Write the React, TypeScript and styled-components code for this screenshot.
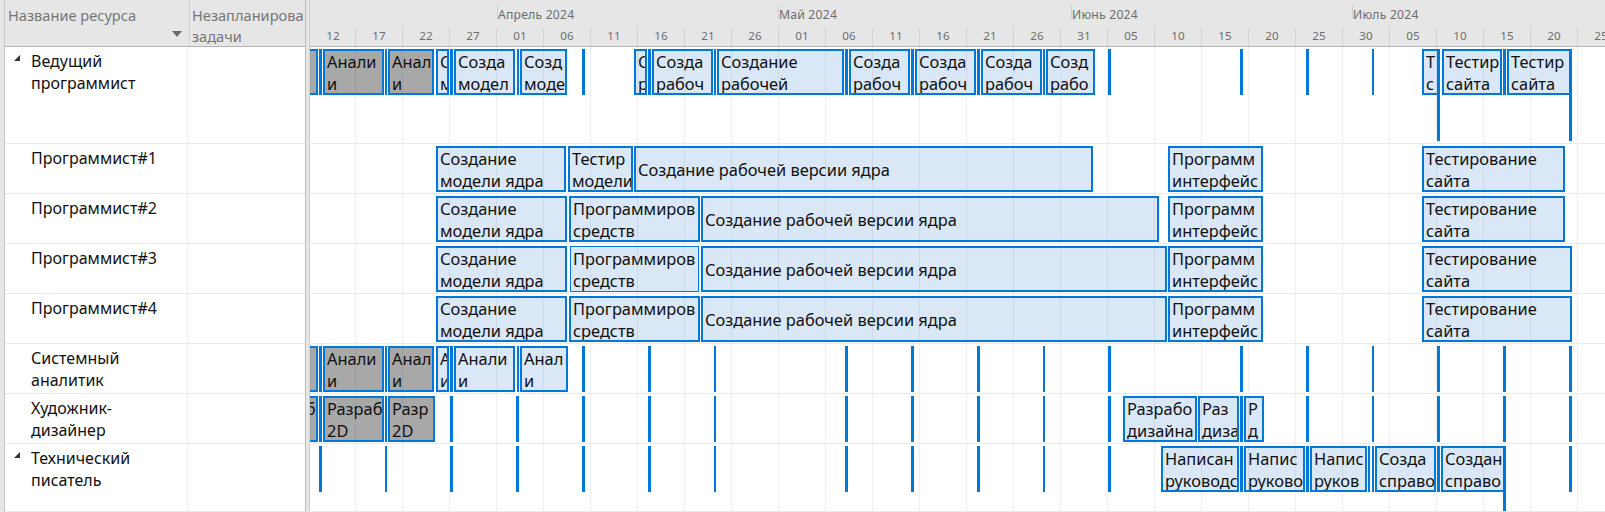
import { createGlobalStyle } from "styled-components";
import styled from "styled-components";

const GlobalStyle = createGlobalStyle`
  html, body {
    margin: 0;
    padding: 0;
    background: #fff;
    overflow: hidden;
  }
  body {
    font-family: "Noto Sans", "Open Sans", sans-serif;
  }
`;

const Window = styled.div`
  display: flex;
  width: 1605px;
  height: 512px;
  overflow: hidden;
  background: #fff;
`;

const EdgeStrip = styled.div`
  width: 4px;
  background: #e6e6e6;
  border-right: 1px solid #c6c6c6;
`;

const SheetPane = styled.div`
  display: flex;
  flex-direction: column;
  width: 300px;
`;

const SheetHeader = styled.div`
  display: flex;
  height: 46px;
  background: #e6e6e6;
  border-bottom: 1px solid #b4b4b4;
  color: #777;
  font-size: 14.6px;
  line-height: 20px;
`;

const NameHeader = styled.div`
  display: flex;
  flex-direction: column;
  justify-content: space-between;
  width: 179px;
  padding: 5px 2px 9px 3px;
  border-right: 1px solid #d2d2d2;
  box-sizing: content-box;
  height: 32px;
`;

const SortArrow = styled.svg`
  align-self: flex-end;
  margin-right: 5px;
  width: 10px;
  height: 6px;
  fill: #6b6b6b;
`;

const SchedHeader = styled.div`
  padding: 5px 0 0 2px;
  line-height: 21px;
  white-space: pre;
  overflow: hidden;
  flex: 1;
`;

const SheetRow = styled.div<{ $h: number }>`
  display: flex;
  height: ${(p) => p.$h}px;
  flex: ${(p) => (p.$h ? "none" : 1)};
  border-bottom: 1px solid #ececec;
`;

const NameCell = styled.div`
  position: relative;
  width: 156px;
  padding: 3px 0 0 26px;
  border-right: 1px solid #efefef;
  font-size: 16px;
  line-height: 22px;
  color: #111;
  white-space: pre;
`;

const Expander = styled.svg`
  position: absolute;
  left: 9px;
  top: 8px;
  width: 6px;
  height: 6px;
  fill: #333;
`;

const Divider = styled.div`
  width: 3px;
  background: #e6e6e6;
  border-left: 1px solid #bcbcbc;
  border-right: 1px solid #cfcfcf;
`;

const ChartPane = styled.div`
  display: flex;
  flex-direction: column;
  flex: 1;
  min-width: 0;
`;

const Timescale = styled.div`
  height: 46px;
  background: #e6e6e6;
  border-bottom: 1px solid #b4b4b4;
  color: #6e6e6e;
  overflow: hidden;
`;

const MonthTier = styled.div`
  display: flex;
  height: 28px;
  padding-top: 5px;
  box-sizing: border-box;
`;

const MonthCell = styled.div<{ $w: number; $first?: boolean }>`
  flex: none;
  width: ${(p) => p.$w}px;
  height: 14px;
  box-sizing: border-box;
  padding-left: 0;
  border-left: ${(p) => (p.$first ? "none" : "1px solid #cfcfcf")};
  font-size: 12.2px;
  line-height: 19px;
  letter-spacing: 0.2px;
  white-space: nowrap;
`;

const TickTier = styled.div`
  display: flex;
  height: 18px;
`;

const TickCell = styled.div<{ $w: number }>`
  flex: none;
  width: ${(p) => p.$w}px;
  box-sizing: border-box;
  border-right: 1px solid #d2d2d2;
  text-align: center;
  font-size: 11.6px;
  line-height: 16px;
  padding-left: ${(p) => (p.$w < 47 ? 1 : 0)}px;
`;

const Lane = styled.div<{ $h: number }>`
  position: relative;
  height: ${(p) => p.$h}px;
  flex: ${(p) => (p.$h ? "none" : 1)};
  overflow: hidden;
  border-bottom: 1px solid #ececec;
  background-image: linear-gradient(to right, #efefef 1px, transparent 1px);
  background-size: 47px 100%;
  background-position: 45px 0;
`;

const Bar = styled.div.attrs<{ $x: number; $w: number }>((p) => ({
  style: { left: p.$x - 310, width: p.$w },
}))<{ $x: number; $w: number; $past?: boolean; $fine?: boolean }>`
  position: absolute;
  top: 2px;
  height: 46px;
  box-sizing: border-box;
  display: flex;
  align-items: center;
  padding: 2px 0 0 2px;
  border: ${(p) => (p.$fine ? "1px" : "2px")} solid #0078d7;
  background: ${(p) => (p.$past ? "rgba(0, 0, 0, 0.34)" : "rgba(0, 95, 195, 0.15)")};
  overflow: hidden;
  color: #111;
  font-size: 16.4px;
  line-height: 22px;
  white-space: pre;
`;

const Marker = styled.div.attrs<{ $x: number; $w: number; $h: number }>((p) => ({
  style: { left: p.$x - 310, width: p.$w, height: p.$h },
}))<{ $x: number; $w: number; $h: number }>`
  position: absolute;
  top: 2px;
  background: #0078d7;
`;

type BarData = { x: number; e: number; t: string; past?: boolean; fine?: boolean };
type MarkData = [x: number, e: number, h?: number];
type Resource = { name: string; h: number; open?: boolean; bars: BarData[]; marks: MarkData[] };

const modelBar = { x: 436, e: 567, t: "Создание\nмодели ядра" };
const uiBar = { x: 1168, e: 1263, t: "Программ\nинтерфейс" };
const siteBar = { x: 1422, e: 1565, t: "Тестирование\nсайта" };
const siteBarLong = { x: 1422, e: 1572, t: "Тестирование\nсайта" };
const coreBar = (e: number) => ({ x: 701, e, t: "Создание рабочей версии ядра" });

const resources: Resource[] = [
  {
    name: "Ведущий\nпрограммист",
    h: 96,
    open: true,
    bars: [
      { x: 256, e: 318, t: "Анали\nи", past: true },
      { x: 323, e: 384, t: "Анали\nи", past: true },
      { x: 388, e: 434, t: "Анал\nи", past: true },
      { x: 436, e: 449, t: "С\nм" },
      { x: 454, e: 515, t: "Созда\nмодел" },
      { x: 520, e: 567, t: "Созд\nмоде" },
      { x: 634, e: 647, t: "С\nр" },
      { x: 652, e: 713, t: "Созда\nрабоч" },
      { x: 717, e: 844, t: "Создание\nрабочей" },
      { x: 849, e: 910, t: "Созда\nрабоч" },
      { x: 915, e: 976, t: "Созда\nрабоч" },
      { x: 981, e: 1042, t: "Созда\nрабоч" },
      { x: 1046, e: 1095, t: "Созд\nрабо" },
      { x: 1422, e: 1440, t: "Т\nс" },
      { x: 1442, e: 1502, t: "Тестир\nсайта" },
      { x: 1507, e: 1572, t: "Тестир\nсайта" },
    ],
    marks: [
      [319, 322], [385, 387], [450, 453], [517, 519], [582, 585], [648, 651],
      [714, 716], [845, 848], [911, 914], [977, 980], [1043, 1045], [1108, 1111],
      [1240, 1243], [1306, 1309], [1372, 1374], [1437, 1440, 92], [1503, 1506], [1569, 1572, 92],
    ],
  },
  {
    name: "Программист#1",
    h: 49,
    bars: [
      { x: 436, e: 566, t: "Создание\nмодели ядра" },
      { x: 568, e: 633, t: "Тестир\nмодели" },
      { x: 634, e: 1093, t: "Создание рабочей версии ядра" },
      uiBar,
      siteBar,
    ],
    marks: [],
  },
  {
    name: "Программист#2",
    h: 49,
    bars: [modelBar, { x: 569, e: 700, t: "Программиров\nсредств" }, coreBar(1159), uiBar, siteBar],
    marks: [],
  },
  {
    name: "Программист#3",
    h: 49,
    bars: [modelBar, { x: 570, e: 699, t: "Программиров\nсредств", fine: true }, coreBar(1167), uiBar, siteBarLong],
    marks: [],
  },
  {
    name: "Программист#4",
    h: 49,
    bars: [modelBar, { x: 569, e: 700, t: "Программиров\nсредств" }, coreBar(1167), uiBar, siteBarLong],
    marks: [],
  },
  {
    name: "Системный\nаналитик",
    h: 49,
    bars: [
      { x: 256, e: 318, t: "Анали\nи", past: true },
      { x: 323, e: 384, t: "Анали\nи", past: true },
      { x: 388, e: 434, t: "Анал\nи", past: true },
      { x: 436, e: 449, t: "А\nи" },
      { x: 454, e: 515, t: "Анали\nи" },
      { x: 520, e: 568, t: "Анал\nи" },
    ],
    marks: [
      [319, 322], [385, 387], [450, 453], [517, 519], [582, 585], [648, 651],
      [714, 716], [845, 848], [911, 914], [977, 980], [1043, 1045], [1108, 1111],
      [1240, 1243], [1306, 1309], [1372, 1374], [1437, 1440], [1503, 1506], [1569, 1572],
    ],
  },
  {
    name: "Художник-\nдизайнер",
    h: 49,
    bars: [
      { x: 256, e: 318, t: "Разраб\n2D", past: true },
      { x: 323, e: 384, t: "Разраб\n2D", past: true },
      { x: 388, e: 435, t: "Разр\n2D", past: true },
      { x: 1123, e: 1197, t: "Разрабо\nдизайна" },
      { x: 1198, e: 1239, t: "Раз\nдиза" },
      { x: 1244, e: 1264, t: "Р\nд" },
    ],
    marks: [
      [319, 322], [385, 387], [450, 453], [516, 519], [582, 585], [648, 651],
      [714, 716], [845, 848], [911, 914], [977, 980], [1043, 1045], [1108, 1111],
      [1240, 1243], [1306, 1309], [1372, 1374], [1437, 1440], [1503, 1506], [1569, 1572],
    ],
  },
  {
    name: "Технический\nписатель",
    h: 0,
    open: true,
    bars: [
      { x: 1161, e: 1239, t: "Написан\nруководс" },
      { x: 1244, e: 1305, t: "Напис\nруково" },
      { x: 1310, e: 1367, t: "Напис\nруков" },
      { x: 1375, e: 1436, t: "Созда\nсправо" },
      { x: 1441, e: 1506, t: "Создан\nсправо" },
    ],
    marks: [
      [319, 322], [385, 387], [450, 453], [516, 519], [582, 585], [648, 651],
      [714, 716], [845, 848], [911, 914], [977, 980], [1043, 1045], [1108, 1111],
      [1240, 1243], [1306, 1309], [1368, 1370], [1372, 1374], [1437, 1440], [1503, 1506, 70], [1569, 1572],
    ],
  },
];

const months = [
  { label: "", w: 187, first: true },
  { label: "Апрель 2024", w: 281 },
  { label: "Май 2024", w: 293 },
  { label: "Июнь 2024", w: 281 },
  { label: "Июль 2024", w: 300 },
];

const ticks = "12 17 22 27 01 06 11 16 21 26 01 06 11 16 21 26 31 05 10 15 20 25 30 05 10 15 20 25".split(" ");

const App = () => {
  return (
    <Window>
      <GlobalStyle />
      <EdgeStrip />
      <SheetPane>
        <SheetHeader>
          <NameHeader>
            <span>Название ресурса</span>
            <SortArrow viewBox="0 0 10 6">
              <path d="M0 0h10L5 6z" />
            </SortArrow>
          </NameHeader>
          <SchedHeader>{"Незапланирова\nзадачи"}</SchedHeader>
        </SheetHeader>
        {resources.map((r) => (
          <SheetRow key={r.name} $h={r.h}>
            <NameCell>
              {r.open && (
                <Expander viewBox="0 0 6 6">
                  <path d="M6 0v6H0z" />
                </Expander>
              )}
              {r.name}
            </NameCell>
          </SheetRow>
        ))}
      </SheetPane>
      <Divider />
      <ChartPane>
        <Timescale>
          <MonthTier>
            {months.map((m) => (
              <MonthCell key={m.w + m.label} $w={m.w} $first={m.first}>
                {m.label}
              </MonthCell>
            ))}
          </MonthTier>
          <TickTier>
            {ticks.map((t, i) => (
              <TickCell key={i} $w={i === 0 ? 46 : 47}>
                {t}
              </TickCell>
            ))}
          </TickTier>
        </Timescale>
        {resources.map((r) => (
          <Lane key={r.name} $h={r.h}>
            {r.marks.map(([x, e, h]) => (
              <Marker key={x} $x={x} $w={e - x} $h={h ?? 46} />
            ))}
            {r.bars.map((b) => (
              <Bar key={b.x} $x={b.x} $w={b.e - b.x} $past={b.past} $fine={b.fine}>
                {b.t}
              </Bar>
            ))}
          </Lane>
        ))}
      </ChartPane>
    </Window>
  );
};

export default App;
